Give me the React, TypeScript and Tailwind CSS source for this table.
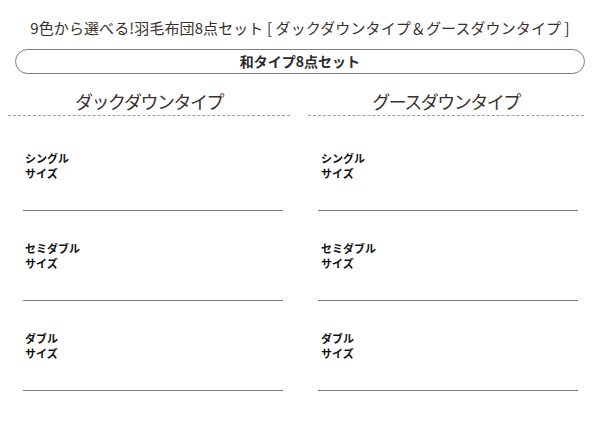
const sizes = [
  ['シングル', 'サイズ'],
  ['セミダブル', 'サイズ'],
  ['ダブル', 'サイズ'],
];

type ColumnProps = {
  title: string;
  width: string;
  textPad: string;
  linePad: string;
};

function Column({ title, width, textPad, linePad }: ColumnProps) {
  return (
    <div className={width}>
      <div className="text-center text-[18px] leading-[26px] text-[#3b302b] tracking-[-1.5px] border-b border-dashed border-[#a0a0a0] pb-px">
        {title}
      </div>
      <div className="mt-[5px]">
        {sizes.map((s) => (
          <div key={s[0]} className={linePad}>
            <div className="pt-[30px] pb-[29px] border-b border-[#7a7a7a]">
              <div className={`${textPad} text-[11px] leading-[15px] font-bold text-[#111]`}>
                <div>{s[0]}</div>
                <div>{s[1]}</div>
              </div>
            </div>
          </div>
        ))}
      </div>
    </div>
  );
}

export default function App() {
  return (
    <div
      className="w-[600px] h-[431px] bg-white overflow-hidden"
      style={{ fontFamily: '"Noto Sans CJK JP", "Noto Sans", sans-serif' }}
    >
      {/* Title */}
      <div className="pt-[18px] text-center text-[15px] leading-[20px] text-[#3a302c] tracking-[0.1px]">
        9色から選べる!羽毛布団8点セット [ ダックダウンタイプ＆グースダウンタイプ ]
      </div>

      {/* Pill */}
      <div className="mx-[15px] mt-[11px] h-[25px] rounded-full border border-[#7d7d7d] flex items-center justify-center text-[14px] font-bold text-[#2b2b2b]">
        和タイプ8点セット
      </div>

      {/* Columns */}
      <div className="mt-[14px] flex pl-[8px] gap-[18px]">
        <Column title="ダックダウンタイプ" width="w-[282px]" textPad="pl-[2px]" linePad="pl-[15px] pr-[7px]" />
        <Column title="グースダウンタイプ" width="w-[276px]" textPad="pl-[3px]" linePad="pl-[10px] pr-[6px]" />
      </div>
    </div>
  );
}
